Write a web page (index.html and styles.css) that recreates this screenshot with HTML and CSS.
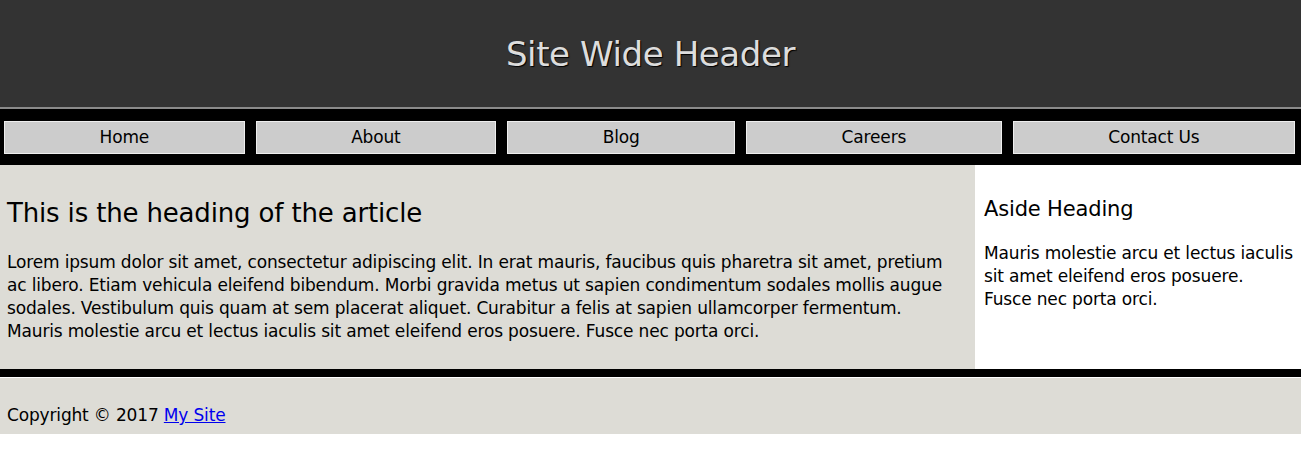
FILE: index.html
```html
<!DOCTYPE html>
<html lang="en">
<head>
  <meta charset="UTF-8">
  <meta name="viewport" content="width=device-width, initial-scale=1.0">
  <title>Site Wide Header</title>
  <link rel="stylesheet" href="styles.css">
</head>
<body>
  <header class="site-header">
    <h1>Site Wide Header</h1>
  </header>

  <nav class="site-nav">
    <a href="#">Home</a>
    <a href="#">About</a>
    <a href="#">Blog</a>
    <a href="#">Careers</a>
    <a href="#">Contact Us</a>
  </nav>

  <div class="content">
    <article class="article">
      <h2>This is the heading of the article</h2>
      <p>Lorem ipsum dolor sit amet, consectetur adipiscing elit. In erat mauris, faucibus quis pharetra sit amet, pretium ac libero. Etiam vehicula eleifend bibendum. Morbi gravida metus ut sapien condimentum sodales mollis augue sodales. Vestibulum quis quam at sem placerat aliquet. Curabitur a felis at sapien ullamcorper fermentum. Mauris molestie arcu et lectus iaculis sit amet eleifend eros posuere. Fusce nec porta orci.</p>
    </article>

    <aside class="aside">
      <h3>Aside Heading</h3>
      <p>Mauris molestie arcu et lectus iaculis sit amet eleifend eros posuere. Fusce nec porta orci.</p>
    </aside>
  </div>

  <footer class="site-footer">
    <p>Copyright &copy; 2017 <a href="#">My Site</a></p>
  </footer>
</body>
</html>
```

FILE: styles.css
```css
body {margin: 0; font-family: "DejaVu Sans", sans-serif; color: #000; font-size: 17px; letter-spacing: -0.16px;}
.site-header {background: #333; height: 107px; border-bottom: 2px solid #8a8a8a; display: flex; align-items: center; justify-content: center;}
.site-header h1 {margin: 0; color: #ddd; font-size: 34px; font-weight: normal; letter-spacing: -0.4px; text-shadow: 1px 1px 1px #000;}
.site-nav {display: flex; gap: 11px; background: #000; padding: 12px 6px 11px 4px;}
.site-nav a {flex: 1 1 auto; background: #ccc; border: 1px solid #eee; color: #000; text-decoration: none; text-align: center; font-size: 17px; line-height: 31px;}
.content {display: flex; background: #dddcd6;}
.article {flex: 1; padding: 16px 14px 26px 7px;}
.article h2 {margin: 17px 0 23px; font-size: 26px; font-weight: normal;}
.article p {margin: 0; line-height: 23px;}
.aside {width: 311px; background: #fff; padding: 16px 6px 16px 9px;}
.aside h3 {margin: 16px 0 21px; font-size: 21px; font-weight: normal;}
.aside p {margin: 0; line-height: 23px;}
.site-footer {background: #dddcd6; border-top: 8px solid #000; box-shadow: inset 0 1px 0 #fff; padding: 1px 7px;}
.site-footer p {margin: 26px 0 6px; line-height: 23px;}
.site-footer a {color: #00e;}
```
